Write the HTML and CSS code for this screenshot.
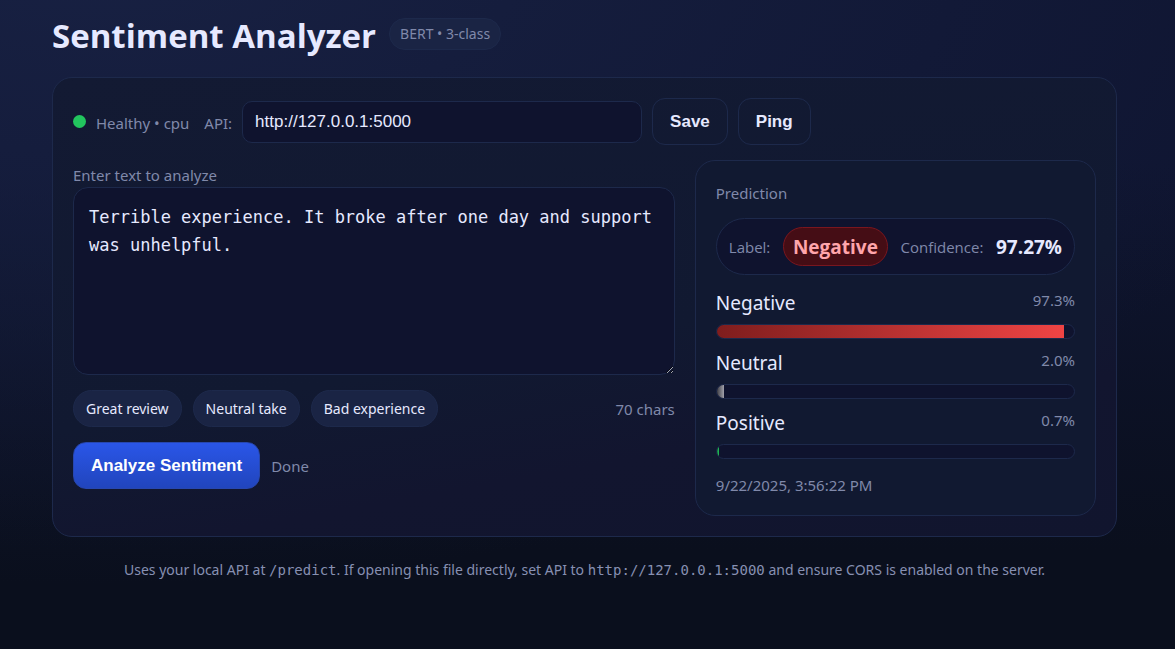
FILE: index.html
```html
<!DOCTYPE html>
<html lang="en">
<head>
<meta charset="utf-8">
<meta name="viewport" content="width=device-width, initial-scale=1">
<title>Sentiment Analyzer</title>
<link rel="stylesheet" href="styles.css">
</head>
<body>
<div class="wrap">
  <header class="header">
    <h1 class="title">Sentiment Analyzer</h1>
    <span class="badge">BERT • 3-class</span>
  </header>

  <main class="card">
    <div class="toolbar">
      <span class="status"><span class="dot"></span><span class="muted">Healthy • cpu</span></span>
      <label class="muted" for="api">API:</label>
      <input class="api-input" id="api" type="text" value="http://127.0.0.1:5000">
      <button class="btn" type="button">Save</button>
      <button class="btn" type="button">Ping</button>
    </div>

    <div class="grid">
      <section class="editor">
        <label class="muted editor-label" for="text">Enter text to analyze</label>
        <textarea class="editor-text" id="text" spellcheck="false">Terrible experience. It broke after one day and support was unhelpful.</textarea>
        <div class="samples">
          <button class="chip" type="button">Great review</button>
          <button class="chip" type="button">Neutral take</button>
          <button class="chip" type="button">Bad experience</button>
          <span class="muted count">70 chars</span>
        </div>
        <div class="actions">
          <button class="btn primary" type="button">Analyze Sentiment</button>
          <span class="muted">Done</span>
        </div>
      </section>

      <section class="panel">
        <div class="muted">Prediction</div>
        <div class="summary">
          <span class="muted">Label:</span>
          <strong class="verdict">Negative</strong>
          <span class="muted">Confidence:</span>
          <strong class="confidence">97.27%</strong>
        </div>
        <div class="scores">
          <div class="score">
            <div class="score-head"><span>Negative</span><span class="muted percent">97.3%</span></div>
            <div class="bar"><div class="fill negative" style="width:97.3%"></div></div>
          </div>
          <div class="score">
            <div class="score-head"><span>Neutral</span><span class="muted percent">2.0%</span></div>
            <div class="bar"><div class="fill neutral" style="width:2%"></div></div>
          </div>
          <div class="score">
            <div class="score-head"><span>Positive</span><span class="muted percent">0.7%</span></div>
            <div class="bar"><div class="fill positive" style="width:0.7%"></div></div>
          </div>
        </div>
        <div class="muted">9/22/2025, 3:56:22 PM</div>
      </section>
    </div>
  </main>

  <footer class="footer">Uses your local API at <code>/predict</code>. If opening this file directly, set API to <code>http://127.0.0.1:5000</code> and ensure CORS is enabled on the server.</footer>
</div>
</body>
</html>
```
FILE: styles.css
```css
:root {
  --text: #e6e9ff;
  --muted: #8089aa;
  --line: #1d294b;
  --field: #0f132e;
  --chip: #1a2444;
}

* { box-sizing: border-box; }

html { min-height: 100%; background: #0a0f1d; }

body {
  margin: 0;
  min-height: 100vh;
  color: var(--text);
  font-family: "Segoe UI", "Noto Sans", sans-serif;
  font-size: 19px;
  line-height: 27px;
  background:
    radial-gradient(1300px 650px at 8% -10%, #182143, #18214300),
    linear-gradient(180deg, #0f1531 0%, #0f1531 25%, #0a0f1d 85%);
}

.wrap { padding: 10px 58px 24px 52px; }

.header {
  display: flex;
  align-items: center;
  gap: 13px;
  margin-bottom: 16px;
}

.title {
  margin: 0;
  font-family: "Segoe UI", "Open Sans", sans-serif;
  font-size: 33px;
  line-height: 51px;
  font-weight: 700;
}

.badge {
  margin-bottom: 3px;
  padding: 4px 10px;
  border: 1px solid #1d294b;
  border-radius: 99px;
  background: var(--chip);
  color: var(--muted);
  font-size: 14px;
  line-height: 22px;
}

.card {
  padding: 20px;
  border: 1px solid var(--line);
  border-radius: 20px;
  background: linear-gradient(170deg, #131a33 0%, #111931 55%, #12152f 75%, #11152e 100%);
}

.muted { color: var(--muted); font-size: 15px; line-height: 26px; }

.toolbar { display: flex; align-items: center; gap: 10px; margin-bottom: 15px; }

.toolbar .muted { padding-top: 3px; }

.status {
  display: flex;
  align-items: center;
  gap: 10px;
  margin-right: 5px;
}

.dot {
  width: 13px;
  height: 13px;
  border-radius: 50%;
  background: #22c55e;
}

.api-input {
  flex: 0 1 400px;
  min-width: 0;
  padding: 10px 12px;
  border: 1px solid var(--line);
  border-radius: 10px;
  background: var(--field);
  color: var(--text);
  font: 17px/20px "Liberation Sans", Arial, sans-serif;
}

.btn {
  padding: 13px 17px;
  border: 1px solid var(--line);
  border-radius: 13px;
  background: transparent;
  color: var(--text);
  font: 700 17px/19px "Liberation Sans", Arial, sans-serif;
}

.primary {
  border-color: #2747b0;
  color: #fff;
  background: linear-gradient(180deg, #2a56e8, #2145bd);
}

.grid {
  display: grid;
  grid-template-columns: 3fr 2fr;
  gap: 20px;
  align-items: start;
}

.editor { display: flex; flex-direction: column; min-width: 0; }

.editor-label { padding-top: 3px; line-height: 24px; }

.editor-text {
  height: 188px;
  padding: 15px;
  border: 1px solid var(--line);
  border-radius: 15px;
  background: var(--field);
  color: var(--text);
  font: 17px/28px "DejaVu Sans Mono", monospace;
  resize: vertical;
}

.samples { display: flex; align-items: center; gap: 11px; margin-top: 15px; }

.chip {
  padding: 7px 12px;
  border: 1px solid #1d294b;
  border-radius: 99px;
  background: var(--chip);
  color: var(--text);
  font: 14px/21px "Segoe UI", "Noto Sans", sans-serif;
}

.count { margin-left: auto; }

.actions { display: flex; align-items: center; gap: 11px; margin-top: 15px; }

.panel {
  min-width: 0;
  padding: 19px 20px 17px;
  border: 1px solid var(--line);
  border-radius: 20px;
  background: #111931;
}

.summary {
  display: flex;
  align-items: center;
  justify-content: space-between;
  margin: 12px 0 15px;
  padding: 8px 12px;
  border: 1px solid var(--line);
  border-radius: 99px;
  background: var(--field);
  font-family: "Segoe UI", "Open Sans", sans-serif;
  white-space: nowrap;
}

.verdict {
  padding: 6px 9px 4px;
  border: 1px solid #7a161e;
  border-radius: 99px;
  background: #450d15;
  color: #ffa5ab;
}

.confidence { padding-top: 2px; }

.scores { display: grid; gap: 11px; margin-bottom: 13px; }

.score-head { display: flex; justify-content: space-between; margin-bottom: 7px; }

.score-head .percent { line-height: 20px; }

.bar {
  height: 15px;
  border: 1px solid var(--line);
  border-radius: 99px;
  background: var(--field);
  overflow: hidden;
}

.fill { height: 100%; }
.negative { background: linear-gradient(90deg, #7f1d1d, #ef4444); }
.neutral { background: linear-gradient(90deg, #3f3f46, #a1a1aa); }
.positive { background: linear-gradient(90deg, #14803d, #22c55e); }

.footer {
  margin-top: 19px;
  color: #8790b2;
  font-size: 14px;
  text-align: center;
}

.footer code { font: 14px "DejaVu Sans Mono", monospace; }
```
